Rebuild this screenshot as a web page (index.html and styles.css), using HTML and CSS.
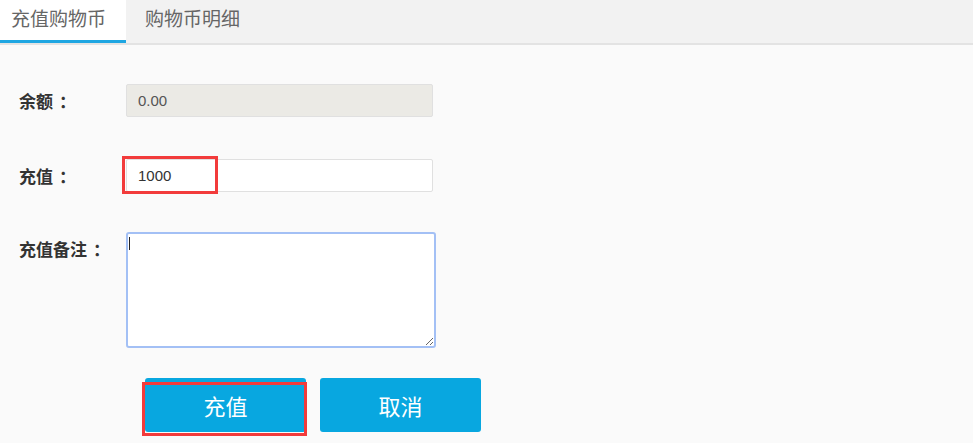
FILE: index.html
```html
<!DOCTYPE html>
<html lang="zh-CN">
<head>
<meta charset="utf-8">
<title>充值购物币</title>
<link rel="stylesheet" href="styles.css">
</head>
<body>
<div class="tabs">
  <div class="tab active">充值购物币</div>
  <div class="tab">购物币明细</div>
</div>
<form class="form">
  <div class="row">
    <label class="label">余额<span class="colon">：</span></label>
    <input class="field disabled" type="text" value="0.00" readonly>
  </div>
  <div class="row row-gap1">
    <label class="label">充值<span class="colon">：</span></label>
    <div class="mark-wrap">
      <input class="field" type="text" value="1000">
      <span class="mark mark-input"></span>
    </div>
  </div>
  <div class="row row-top row-gap2">
    <label class="label">充值备注<span class="colon">：</span></label>
    <div class="mark-wrap">
      <textarea class="memo"></textarea>
      <span class="caret"></span>
    </div>
  </div>
  <div class="actions">
    <div class="mark-wrap">
      <button class="btn" type="button">充值</button>
      <span class="mark mark-btn"></span>
    </div>
    <button class="btn" type="button">取消</button>
  </div>
</form>
</body>
</html>
```

FILE: styles.css
```css
* { box-sizing: border-box; }
html, body { margin: 0; padding: 0; }
body {
  background: #fafafa;
  font-family: "Liberation Sans", "Noto Sans CJK SC", sans-serif;
  width: 973px;
  height: 443px;
  overflow: hidden;
}
.tabs {
  display: flex;
  height: 45px;
  background: #f2f2f2;
  border-bottom: 2px solid #e3e3e3;
}
.tab {
  height: 43px;
  padding: 0 19px;
  font-family: "Noto Sans CJK SC", sans-serif;
  font-size: 19px;
  line-height: 36px;
  color: #666;
}
.tab.active {
  width: 126px;
  padding: 0 0 0 11px;
  background: #fff;
  border-bottom: 3px solid #1ea6e2;
}
.form {
  padding: 39px 0 0 19px;
}
.row {
  display: flex;
  align-items: center;
}
.row-top { align-items: flex-start; }
.row-gap1 { margin-top: 42px; }
.row-gap2 { margin-top: 40px; }
.label {
  width: 107px;
  font-family: "Noto Sans CJK SC", sans-serif;
  font-size: 17px;
  font-weight: bold;
  color: #333;
  line-height: 33px;
}
.colon {
  padding-left: 6px;
}
.mark-wrap { position: relative; }
.field {
  display: block;
  width: 307px;
  height: 33px;
  padding: 0 11px;
  border: 1px solid #e0e0e0;
  border-radius: 2px;
  background: #fff;
  font-family: "Liberation Sans", sans-serif;
  font-size: 15px;
  color: #333;
  outline: none;
}
.field.disabled {
  background: #ebeae5;
  color: #555;
}
.memo {
  display: block;
  width: 310px;
  height: 116px;
  margin: 0;
  border: 2px solid #a3c0f5;
  border-radius: 3px;
  background: #fff;
  outline: none;
}
.caret {
  position: absolute;
  left: 3px;
  top: 5px;
  width: 1px;
  height: 13px;
  background: #222;
}
.mark {
  position: absolute;
  border: 3px solid #f23b3b;
  pointer-events: none;
}
.mark-input {
  left: -4px;
  top: -3px;
  width: 96px;
  height: 38px;
}
.mark-btn {
  left: -3px;
  top: 4px;
  width: 165px;
  height: 54px;
}
.actions {
  display: flex;
  gap: 14px;
  margin: 30px 0 0 126px;
}
.btn {
  display: block;
  width: 161px;
  height: 54px;
  border: none;
  border-radius: 3px;
  background: #08a7e0;
  color: #fff;
  font-family: "Noto Sans CJK SC", sans-serif;
  font-size: 22px;
  padding: 0;
}
```
